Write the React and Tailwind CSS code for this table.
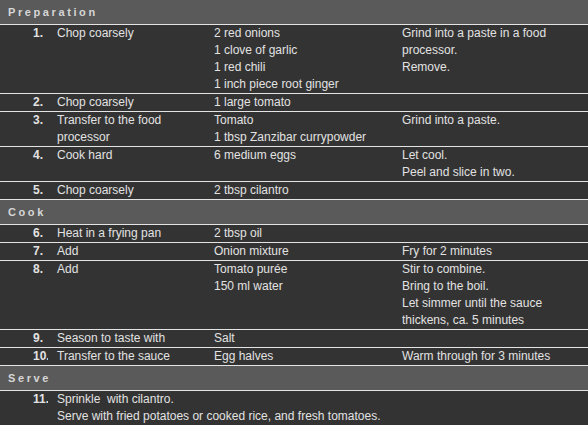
import React from "react";

// Recipe steps grouped by section
const sections = [
  {
    title: "Preparation",
    steps: [
      {
        n: "1.",
        action: ["Chop coarsely"],
        items: ["2 red onions", "1 clove of garlic", "1 red chili", "1 inch piece root ginger"],
        notes: ["Grind into a paste in a food processor.", "Remove."],
      },
      { n: "2.", action: ["Chop coarsely"], items: ["1 large tomato"], notes: [] },
      {
        n: "3.",
        action: ["Transfer to the food processor"],
        items: ["Tomato", "1 tbsp Zanzibar currypowder"],
        notes: ["Grind into a paste."],
      },
      {
        n: "4.",
        action: ["Cook hard"],
        items: ["6 medium eggs"],
        notes: ["Let cool.", "Peel and slice in two."],
      },
      { n: "5.", action: ["Chop coarsely"], items: ["2 tbsp cilantro"], notes: [] },
    ],
  },
  {
    title: "Cook",
    steps: [
      { n: "6.", action: ["Heat in a frying pan"], items: ["2 tbsp oil"], notes: [] },
      { n: "7.", action: ["Add"], items: ["Onion mixture"], notes: ["Fry for 2 minutes"] },
      {
        n: "8.",
        action: ["Add"],
        items: ["Tomato purée", "150 ml water"],
        notes: ["Stir to combine.", "Bring to the boil.", "Let simmer until the sauce thickens, ca. 5 minutes"],
      },
      { n: "9.", action: ["Season to taste with"], items: ["Salt"], notes: [] },
      { n: "10.", action: ["Transfer to the sauce"], items: ["Egg halves"], notes: ["Warm through for 3 minutes"] },
    ],
  },
];

const Lines = ({ lines }) => (
  <>
    {lines.map((l, i) => (
      <div key={i}>{l}</div>
    ))}
  </>
);

const SectionHeader = ({ title }) => (
  <div className="h-[24px] flex items-center pl-[8px] bg-[#5a5a5a] border-b border-[#e4e4e4] box-content text-[11px] font-bold tracking-[2.6px] text-[#d6d6d6]">
    {title}
  </div>
);

const StepRow = ({ step }) => (
  <div className="flex border-b border-[#e4e4e4] last:border-b-0">
    <div className="w-[48px] shrink-0 pl-[33px] overflow-hidden whitespace-nowrap font-bold">
      {step.n}
    </div>
    <div className="w-[166px] shrink-0 pl-[9px] pr-[10px]">
      <Lines lines={step.action} />
    </div>
    <div className="w-[188px] shrink-0">
      <Lines lines={step.items} />
    </div>
    <div className="flex-1 pr-[6px]">
      <Lines lines={step.notes} />
    </div>
  </div>
);

export default function App() {
  return (
    <div
      className="w-[588px] h-[425px] overflow-hidden bg-[#333333] text-[#e2e2e2] text-[12px] leading-[17px]"
      style={{ fontFamily: '"Liberation Sans", Arial, sans-serif' }}
    >
      {sections.map((s) => (
        <div key={s.title} className="border-b border-[#e4e4e4]">
          <SectionHeader title={s.title} />
          {s.steps.map((st) => (
            <StepRow key={st.n} step={st} />
          ))}
        </div>
      ))}
      <SectionHeader title="Serve" />
      <div className="flex">
        <div className="w-[48px] shrink-0 pl-[33px] overflow-hidden whitespace-nowrap font-bold">11.</div>
        <div className="pl-[9px]">
          <div>Sprinkle&nbsp; with cilantro.</div>
          <div>Serve with fried potatoes or cooked rice, and fresh tomatoes.</div>
        </div>
      </div>
    </div>
  );
}
